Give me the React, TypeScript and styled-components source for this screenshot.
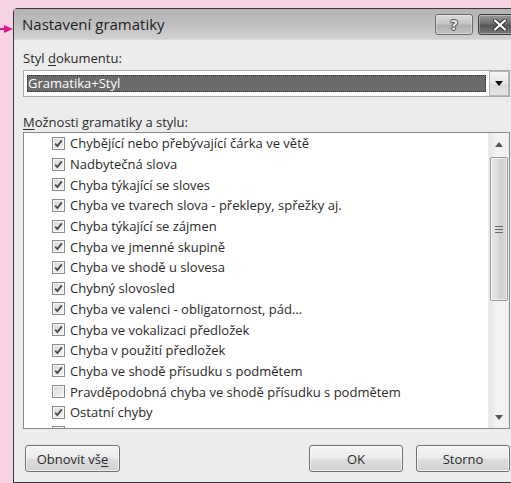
import React from "react";
import styled, { createGlobalStyle } from "styled-components";

const GlobalStyle = createGlobalStyle`
  html, body {
    margin: 0;
    padding: 0;
    background: #f6d2e5;
  }
  * { box-sizing: border-box; }
`;

const FONT = `"Open Sans", "Noto Sans", "DejaVu Sans", sans-serif`;

const Page = styled.div`
  display: flex;
  height: 483px;
  width: 511px;
  overflow: hidden;
  padding-top: 8px;
  font-family: ${FONT};
  color: #2a2a2a;
`;

const Gutter = styled.div`
  width: 13px;
  flex-shrink: 0;
  padding-top: 9px;
`;

const Window = styled.div`
  width: 514px;
  flex-shrink: 0;
  display: flex;
  flex-direction: column;
  border: 1px solid #3a3a3a;
  border-radius: 4px 4px 0 0;
  background: #ececec;
`;

const TitleBar = styled.div`
  height: 31px;
  display: flex;
  align-items: flex-start;
  padding: 0 5px 0 8px;
  background: linear-gradient(to bottom, #b3b3b3 0%, #c1c1c1 55%, #d0d0d0 100%);
  border-bottom: 1px solid #d8d8d8;
`;

const Title = styled.div`
  flex: 1;
  font-size: 15px;
  line-height: 30px;
  color: #222;
`;

const CaptionButton = styled.div<{ $close?: boolean }>`
  margin-top: 5px;
  width: ${({ $close }) => ($close ? 43 : 38)}px;
  height: 21px;
  margin-left: ${({ $close }) => ($close ? 5 : 0)}px;
  display: flex;
  align-items: center;
  justify-content: center;
  border: 1px solid ${({ $close }) => ($close ? "#3c3c3c" : "#6a6a6a")};
  border-radius: 3px;
  background: ${({ $close }) =>
    $close
      ? "linear-gradient(to bottom, #9a9a9a 0%, #6e6e6e 45%, #555 55%, #7a7a7a 100%)"
      : "linear-gradient(to bottom, #dcdcdc 0%, #c4c4c4 45%, #afafaf 55%, #c2c2c2 100%)"};
  box-shadow: inset 0 0 0 1px rgba(255, 255, 255, 0.35);
`;

const Body = styled.div`
  flex: 1;
  padding: 9px 16px 0 9px;
`;

const FieldLabel = styled.div<{ $gap?: number }>`
  font-size: 13px;
  line-height: 18px;
  margin-top: ${({ $gap }) => $gap ?? 0}px;
  u { text-decoration: underline; text-underline-offset: 2px; }
`;

const Select = styled.div`
  margin-top: 3px;
  width: 487px;
  height: 27px;
  display: flex;
  border: 1px solid #a9a9a9;
  background: #fff;
`;

const SelectField = styled.div`
  flex: 1;
  padding: 4px 3px;
`;

const SelectedValue = styled.div`
  height: 100%;
  background: #6b6b6b;
  outline: 1px dotted #2e2e2e;
  outline-offset: -1px;
  color: #fff;
  font-size: 13px;
  line-height: 17px;
  padding-left: 1px;
`;

const DropButton = styled.div`
  width: 20px;
  display: flex;
  align-items: center;
  justify-content: center;
  border: 1px solid #b8b8b8;
  background: linear-gradient(to bottom, #f6f6f6 0%, #e6e6e6 50%, #d8d8d8 51%, #e4e4e4 100%);
`;

const ListBox = styled.div`
  margin-top: 1px;
  width: 487px;
  height: 297px;
  display: flex;
  border: 1px solid #8a8a8a;
  background: #fff;
`;

const Items = styled.div`
  flex: 1;
  overflow: hidden;
`;

const Row = styled.div`
  height: 20.7px;
  display: flex;
  align-items: center;
  padding-left: 28px;
  font-size: 13px;
  white-space: nowrap;
`;

const Box = styled.div`
  width: 13px;
  height: 13px;
  flex-shrink: 0;
  margin-right: 5px;
  border: 1px solid #8c8c8c;
  background: linear-gradient(135deg, #d8d8d8 0%, #f4f4f4 100%);
  box-shadow: inset 0 0 0 1px #f7f7f7;
  display: flex;
  align-items: center;
  justify-content: center;
`;

const ScrollBar = styled.div`
  width: 21px;
  display: flex;
  flex-direction: column;
  background: linear-gradient(to right, #e6e6e6, #f4f4f4 40%, #f0f0f0);
  border-left: 1px solid #ededed;
`;

const ScrollArrow = styled.div`
  height: 22px;
  display: flex;
  align-items: center;
  justify-content: center;
`;

const Thumb = styled.div`
  margin: 2px 1px 0 1px;
  height: 144px;
  border: 1px solid #979797;
  border-radius: 2px;
  background: linear-gradient(to right, #e8e8e8 0%, #dcdcdc 45%, #cfcfcf 55%, #d8d8d8 100%);
  box-shadow: inset 0 0 0 1px rgba(255, 255, 255, 0.6);
  display: flex;
  align-items: center;
  justify-content: center;
`;

const Track = styled.div`
  flex: 1;
`;

const Footer = styled.div`
  margin-top: 16px;
  width: 487px;
  display: flex;
  gap: 13px;
  padding-left: 2px;
`;

const PushButton = styled.div<{ $width: number; $push?: boolean }>`
  width: ${({ $width }) => $width}px;
  height: 27px;
  margin-left: ${({ $push }) => ($push ? "auto" : "0")};
  display: flex;
  align-items: center;
  justify-content: center;
  border: 1px solid #707070;
  border-radius: 3px;
  background: linear-gradient(to bottom, #f4f4f4 0%, #ececec 48%, #dedede 52%, #d0d0d0 100%);
  box-shadow: inset 0 0 0 1px rgba(255, 255, 255, 0.7);
  font-size: 13px;
  u { text-decoration: underline; text-underline-offset: 2px; }
`;

const options: { label: string; checked: boolean }[] = [
  { label: "Chybějící nebo přebývající čárka ve větě", checked: true },
  { label: "Nadbytečná slova", checked: true },
  { label: "Chyba týkající se sloves", checked: true },
  { label: "Chyba ve tvarech slova - překlepy, spřežky aj.", checked: true },
  { label: "Chyba týkající se zájmen", checked: true },
  { label: "Chyba ve jmenné skupině", checked: true },
  { label: "Chyba ve shodě u slovesa", checked: true },
  { label: "Chybný slovosled", checked: true },
  { label: "Chyba ve valenci - obligatornost, pád…", checked: true },
  { label: "Chyba ve vokalizaci předložek", checked: true },
  { label: "Chyba v použití předložek", checked: true },
  { label: "Chyba ve shodě přísudku s podmětem", checked: true },
  { label: "Pravděpodobná chyba ve shodě přísudku s podmětem", checked: false },
  { label: "Ostatní chyby", checked: true },
  { label: "Styl psaní textu", checked: true },
];

const PointerArrow = () => (
  <svg width="13" height="10" viewBox="0 0 13 10">
    <line x1="0" y1="5" x2="6" y2="5" stroke="#e0198c" strokeWidth="2" />
    <polygon points="4,1 13,5 4,9" fill="#e0198c" />
  </svg>
);

const Tick = () => (
  <svg width="9" height="9" viewBox="0 0 9 9">
    <path d="M1.2 4.6 L3.4 7 L7.8 1.4" fill="none" stroke="#4a4a4a" strokeWidth="1.8" />
  </svg>
);

const Triangle = ({ up, color = "#333" }: { up?: boolean; color?: string }) => (
  <svg width="8" height="5" viewBox="0 0 8 5">
    <polygon points={up ? "0,5 8,5 4,0" : "0,0 8,0 4,5"} fill={color} />
  </svg>
);

const HelpGlyph = () => (
  <span
    style={{
      fontFamily: `"DejaVu Sans", sans-serif`,
      fontWeight: 700,
      fontSize: 14,
      color: "#e6e6e6",
      textShadow: "0 0 1px #333, 1px 0 0 #555, -1px 0 0 #555, 0 1px 0 #555, 0 -1px 0 #555",
      lineHeight: "16px",
    }}
  >
    ?
  </span>
);

const CloseGlyph = () => (
  <svg width="14" height="12" viewBox="0 0 14 12">
    <path d="M2 1.5 L12 10.5 M12 1.5 L2 10.5" stroke="#333" strokeWidth="4" strokeLinecap="round" />
    <path d="M2 1.5 L12 10.5 M12 1.5 L2 10.5" stroke="#fff" strokeWidth="2.2" strokeLinecap="round" />
  </svg>
);

const Grip = () => (
  <svg width="8" height="7" viewBox="0 0 8 7">
    <path d="M0 0.5 H8 M0 3.5 H8 M0 6.5 H8" stroke="#6a6a6a" strokeWidth="1" />
  </svg>
);

export default function App() {
  return (
    <>
      <GlobalStyle />
      <Page>
        <Gutter>
          <PointerArrow />
        </Gutter>
        <Window>
          <TitleBar>
            <Title>Nastavení gramatiky</Title>
            <CaptionButton>
              <HelpGlyph />
            </CaptionButton>
            <CaptionButton $close>
              <CloseGlyph />
            </CaptionButton>
          </TitleBar>
          <Body>
            <FieldLabel>
              Styl <u>d</u>okumentu:
            </FieldLabel>
            <Select>
              <SelectField>
                <SelectedValue>Gramatika+Styl</SelectedValue>
              </SelectField>
              <DropButton>
                <Triangle color="#111" />
              </DropButton>
            </Select>
            <FieldLabel $gap={16}>
              <u>M</u>ožnosti gramatiky a stylu:
            </FieldLabel>
            <ListBox>
              <Items>
                {options.map((o) => (
                  <Row key={o.label}>
                    <Box>{o.checked && <Tick />}</Box>
                    {o.label}
                  </Row>
                ))}
              </Items>
              <ScrollBar>
                <ScrollArrow>
                  <Triangle up color="#555" />
                </ScrollArrow>
                <Thumb>
                  <Grip />
                </Thumb>
                <Track />
                <ScrollArrow>
                  <Triangle color="#555" />
                </ScrollArrow>
              </ScrollBar>
            </ListBox>
            <Footer>
              <PushButton $width={95}>
                Obnovit vš<u>e</u>
              </PushButton>
              <PushButton $width={94} $push>
                OK
              </PushButton>
              <PushButton $width={94}>Storno</PushButton>
            </Footer>
          </Body>
        </Window>
      </Page>
    </>
  );
}
